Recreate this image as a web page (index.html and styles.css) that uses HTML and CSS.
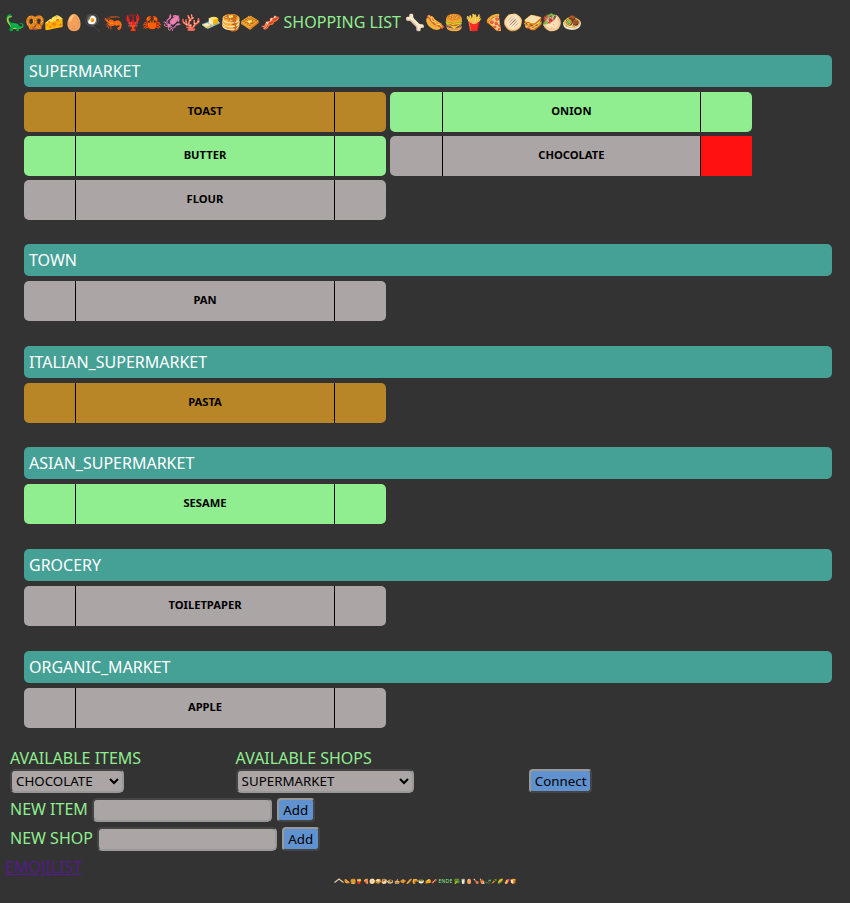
FILE: index.html
```html
<!DOCTYPE html>
<html lang="en">
<head>
  <meta charset="UTF-8">
  <meta name="viewport" content="width=device-width, initial-scale=1.0">
  <title>Shopping List</title>
  <link rel="stylesheet" href="styles.css">
</head>
<body>
  <h1 class="title"><span class="emojis">🦕🥨🧀🥚🍳🦐🦞🦀🦑🪸🧈🥞🧇🥓</span> SHOPPING LIST <span class="emojis">🦴🌭🍔🍟🍕🫓🥪🥙🧆</span></h1>

  <div class="shops">
    <section class="shop">
      <h2 class="shop-name">SUPERMARKET</h2>
      <div class="items">
        <div class="item item-orange"><button class="side"></button><span class="name">TOAST</span><button class="side"></button></div>
        <div class="item item-green"><button class="side"></button><span class="name">ONION</span><button class="side"></button></div>
        <div class="item item-green"><button class="side"></button><span class="name">BUTTER</span><button class="side"></button></div>
        <div class="item"><button class="side"></button><span class="name">CHOCOLATE</span><button class="side side-red"></button></div>
        <div class="item"><button class="side"></button><span class="name">FLOUR</span><button class="side"></button></div>
      </div>
    </section>
    <section class="shop">
      <h2 class="shop-name">TOWN</h2>
      <div class="items">
        <div class="item"><button class="side"></button><span class="name">PAN</span><button class="side"></button></div>
      </div>
    </section>
    <section class="shop">
      <h2 class="shop-name">ITALIAN_SUPERMARKET</h2>
      <div class="items">
        <div class="item item-orange"><button class="side"></button><span class="name">PASTA</span><button class="side"></button></div>
      </div>
    </section>
    <section class="shop">
      <h2 class="shop-name">ASIAN_SUPERMARKET</h2>
      <div class="items">
        <div class="item item-green"><button class="side"></button><span class="name">SESAME</span><button class="side"></button></div>
      </div>
    </section>
    <section class="shop">
      <h2 class="shop-name">GROCERY</h2>
      <div class="items">
        <div class="item"><button class="side"></button><span class="name">TOILETPAPER</span><button class="side"></button></div>
      </div>
    </section>
    <section class="shop">
      <h2 class="shop-name">ORGANIC_MARKET</h2>
      <div class="items">
        <div class="item"><button class="side"></button><span class="name">APPLE</span><button class="side"></button></div>
      </div>
    </section>
  </div>

  <div class="forms">
    <div class="connect-row">
      <div class="field field-items">
        <label for="item-select">AVAILABLE ITEMS</label>
        <select id="item-select" class="select-items"><option>CHOCOLATE</option></select>
      </div>
      <div class="field field-shops">
        <label for="shop-select">AVAILABLE SHOPS</label>
        <select id="shop-select" class="select-shops"><option>SUPERMARKET</option></select>
      </div>
      <button class="btn btn-connect">Connect</button>
    </div>
    <div class="add-row">
      <label for="new-item">NEW ITEM</label>
      <input id="new-item" type="text">
      <button class="btn">Add</button>
    </div>
    <div class="add-row">
      <label for="new-shop">NEW SHOP</label>
      <input id="new-shop" type="text">
      <button class="btn">Add</button>
    </div>
  </div>

  <a class="emoji-link" href="#">EMOJILIST</a>
  <p class="tiny"><svg class="arch" width="10" height="5" viewBox="0 0 10 5"><path d="M0.5 4.5 L5 1 L9.5 4.5" fill="none" stroke="#e8c9a0" stroke-width="1.2"/></svg>🌭🍔🍟🍕🫓🥪🥙🧆🥧🧇🥖🥐🥗🧀🥓 <span class="ende">ENDE</span> 🥦🥛🥚🍗🍖🌶🥕🌽🍠🍞</p>
</body>
</html>
```

FILE: styles.css
```css
body {
  background-color: #333;
  color: #90ee90;
  font-family: "Noto Sans", sans-serif;
  font-size: 16px;
  margin: 0;
  padding: 0;
}

.title {
  font-size: 16px;
  font-weight: normal;
  line-height: 22px;
  margin: 0;
  padding: 11px 0 0 5px;
  white-space: nowrap;
}

.emojis {
  letter-spacing: -0.4px;
}

.shops {
  margin: 21.65px 18px 0 24px;
}

.shop {
  margin-bottom: 24.6px;
}

.shop-name {
  background-color: #45a096;
  border-radius: 5px;
  color: #fff;
  font-size: 16px;
  font-weight: normal;
  line-height: 32px;
  margin: 0 0 5px;
  padding-left: 5px;
}

.items {
  display: grid;
  grid-template-columns: 362px 362px;
  gap: 4px 4.4px;
}

.item {
  background-color: #aba5a5;
  border-radius: 5px;
  color: #000;
  display: flex;
  height: 40px;
}

.item-orange {
  background-color: #b88627;
}

.item-green {
  background-color: #90ee90;
}

.side {
  background: none;
  border: none;
  flex: 0 0 51.4px;
  padding: 0;
}

.side-red {
  background-color: #ff1111;
}

.name {
  border-left: 1px solid #000;
  border-right: 1px solid #000;
  flex: 1;
  font-size: 11.2px;
  font-weight: bold;
  line-height: 38.7px;
  text-align: center;
}

.forms {
  margin: -4.5px 0 0 10px;
}

.connect-row {
  display: flex;
  align-items: flex-end;
}

.field {
  display: flex;
  flex-direction: column;
  align-items: flex-start;
}

.field label {
  line-height: 20px;
  margin-bottom: 1px;
}

.field-items {
  width: 225.6px;
}

.field-shops {
  width: 293.4px;
}

select,
input {
  background-color: #aba5a5;
  border: 2px inset #999;
  border-radius: 5px;
  box-sizing: border-box;
  color: #000;
  font-family: "Noto Sans", sans-serif;
  font-size: 13.33px;
  height: 24px;
}

select {
  padding: 0;
}

.select-items {
  width: 114px;
}

.select-shops {
  width: 178px;
}

input {
  margin: 0 4.5px;
  width: 180px;
}

.btn {
  background-color: #5f92cf;
  border: 2px outset #999;
  border-radius: 4px;
  box-sizing: border-box;
  color: #000;
  font-family: "Noto Sans", sans-serif;
  font-size: 13.33px;
  height: 24px;
  padding: 0 4.4px;
}

.btn-connect {
  padding: 0 3.8px;
}

.add-row {
  display: flex;
  align-items: center;
  height: 24px;
  margin-top: 5px;
}

.add-row label {
  margin-bottom: 2px;
}

.emoji-link {
  color: #551a8b;
  display: block;
  line-height: 20px;
  margin: 6px 0 0 5px;
  width: fit-content;
}

.tiny {
  font-size: 5px;
  letter-spacing: 0.2px;
  line-height: 7px;
  margin: 1px 0 0;
  text-align: center;
}

.arch {
  vertical-align: baseline;
}

.ende {
  color: #90ee90;
}
```
